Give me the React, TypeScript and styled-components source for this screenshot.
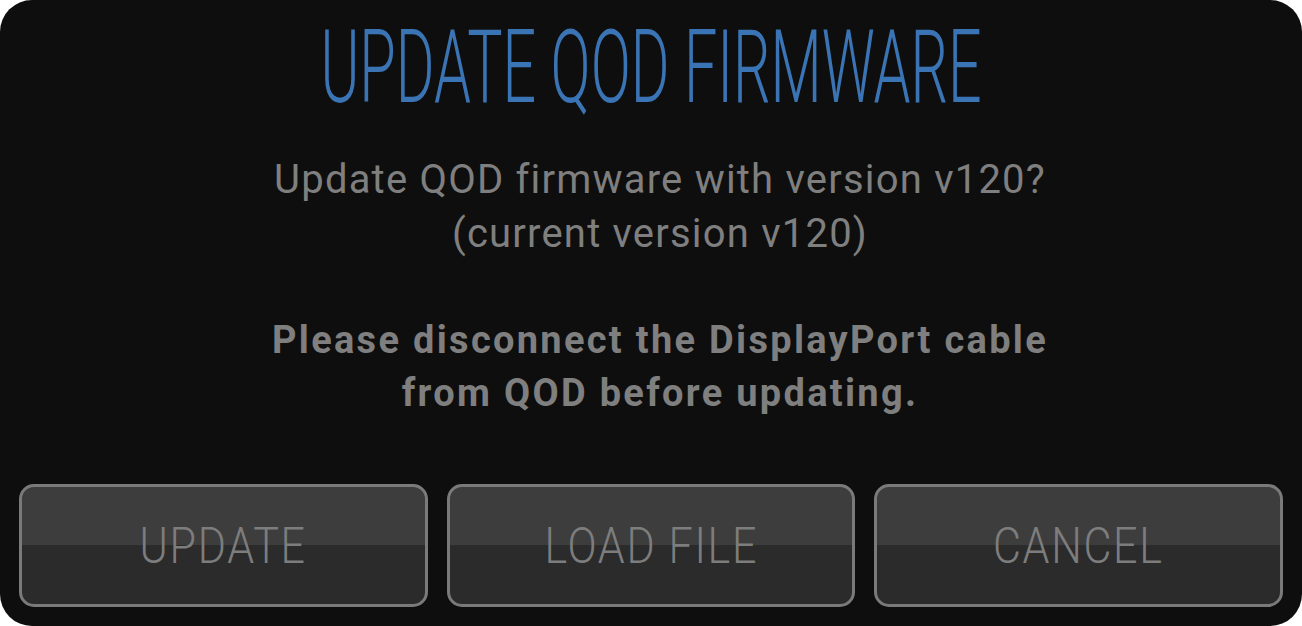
import { FC } from 'react';
import styled, { createGlobalStyle } from 'styled-components';

const Global = createGlobalStyle`
    html, body {
        margin: 0;
        padding: 0;
        background: #ffffff;
    }
    #root {
        width: 1302px;
        height: 626px;
    }
`;

const Dialog = styled.div`
    box-sizing: border-box;
    width: 1302px;
    height: 626px;
    display: flex;
    flex-direction: column;
    align-items: center;
    padding: 17px 19px 19px;
    background: #0e0e0e;
    border-radius: 32px;
    font-family: Roboto, "Liberation Sans", sans-serif;
`;

const Title = styled.h1`
    margin: 0;
    height: 100px;
    font-size: 102px;
    font-weight: 300;
    line-height: 100px;
    color: #3a74b4;
    white-space: nowrap;
    transform: scaleX(0.58);
`;

const Message = styled.p`
    margin: 36px 0 0;
    padding-left: 18px;
    font-size: 40px;
    line-height: 54px;
    color: #7f7f7f;
    text-align: center;
    letter-spacing: 1.2px;
`;

const Warning = styled.p`
    margin: 53px 0 0;
    padding-left: 18px;
    font-size: 38px;
    font-weight: 700;
    line-height: 53px;
    color: #7f7f7f;
    text-align: center;
    letter-spacing: 2.3px;
`;

const ButtonRow = styled.div`
    margin-top: auto;
    width: 100%;
    display: grid;
    grid-template-columns: repeat(3, 1fr);
    gap: 19px;
`;

const Button = styled.button`
    box-sizing: border-box;
    height: 123px;
    display: flex;
    align-items: center;
    justify-content: center;
    border: 3px solid #7a7a7a;
    border-radius: 15px;
    background: linear-gradient(to bottom, #3d3d3d 0%, #3d3d3d 50%, #2b2b2b 50%, #2b2b2b 100%);
    color: #7d7d7d;
    font-family: Roboto, "Liberation Sans", sans-serif;
    font-size: 50px;
    font-weight: 300;
    padding: 0;
    cursor: pointer;
`;

const ButtonLabel = styled.span`
    display: inline-block;
    letter-spacing: 2px;
    transform: scaleX(0.86);
`;

export const App: FC = () => {
    return (
        <>
            <Global />
            <Dialog>
                <Title>UPDATE QOD FIRMWARE</Title>
                <Message>
                    Update QOD firmware with version v120?
                    <br />
                    (current version v120)
                </Message>
                <Warning>
                    Please disconnect the DisplayPort cable
                    <br />
                    from QOD before updating.
                </Warning>
                <ButtonRow>
                    <Button><ButtonLabel>UPDATE</ButtonLabel></Button>
                    <Button><ButtonLabel>LOAD FILE</ButtonLabel></Button>
                    <Button><ButtonLabel>CANCEL</ButtonLabel></Button>
                </ButtonRow>
            </Dialog>
        </>
    );
};

export default App;
